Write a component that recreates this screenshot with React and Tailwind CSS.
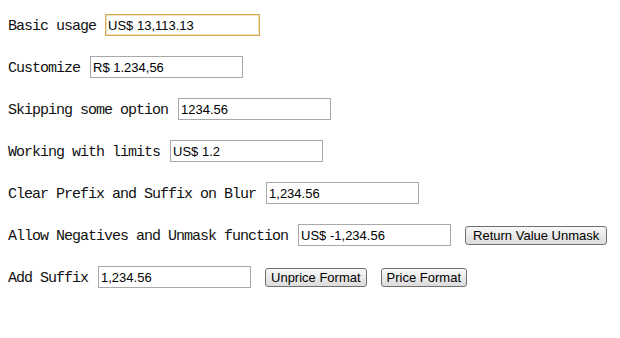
import React from "react";

const labelCls =
  "block h-[22px] font-['Liberation_Mono',monospace] text-[15px] tracking-[-1px] text-[#111] whitespace-pre leading-[26px]";
const inputBase =
  "ml-[10px] h-[22px] bg-white px-[2px] font-['Liberation_Sans',Arial,sans-serif] text-[13px] text-black outline-none";
const btnBase =
  "ml-[14px] h-[19px] rounded-[3px] border border-[#707070] bg-gradient-to-b from-[#f8f8f8] to-[#dcdcdc] font-['Liberation_Sans',Arial,sans-serif] text-[13px] leading-[17px] text-black";

function Row({ label, value, children }) {
  return (
    <div className="flex items-center h-[22px]">
      <span className={labelCls}>{label}</span>
      <input
        readOnly
        defaultValue={value}
        className={inputBase + " w-[153px] border border-[#a9a9a9]"}
      />
      {children}
    </div>
  );
}

export default function App() {
  return (
    <div className="w-[620px] h-[338px] bg-white pl-[8px] pt-[14px] flex flex-col gap-[20px]">
      <div className="flex items-center h-[22px]">
        <span className={labelCls}>Basic usage</span>
        <input
          readOnly
          defaultValue="US$ 13,113.13"
          className="ml-[9px] w-[155px] h-[22px] border border-[#d2ad55] shadow-[inset_0_0_0_1px_#f1e2b6] bg-white px-[2px] font-['Liberation_Sans',Arial,sans-serif] text-[13px] text-black outline-none"
        />
      </div>
      <Row label="Customize" value="R$ 1.234,56" />
      <Row label="Skipping some option" value="1234.56" />
      <Row label="Working with limits" value="US$ 1.2" />
      <Row label="Clear Prefix and Suffix on Blur" value="1,234.56" />
      <Row label="Allow Negatives and Unmask function" value="US$ -1,234.56">
        <button className={btnBase + " px-[7px]"}>Return Value Unmask</button>
      </Row>
      <Row label="Add Suffix" value="1,234.56">
        <button className={btnBase + " px-[5px]"}>Unprice Format</button>
        <button className={btnBase + " px-[5px]"}>Price Format</button>
      </Row>
    </div>
  );
}
